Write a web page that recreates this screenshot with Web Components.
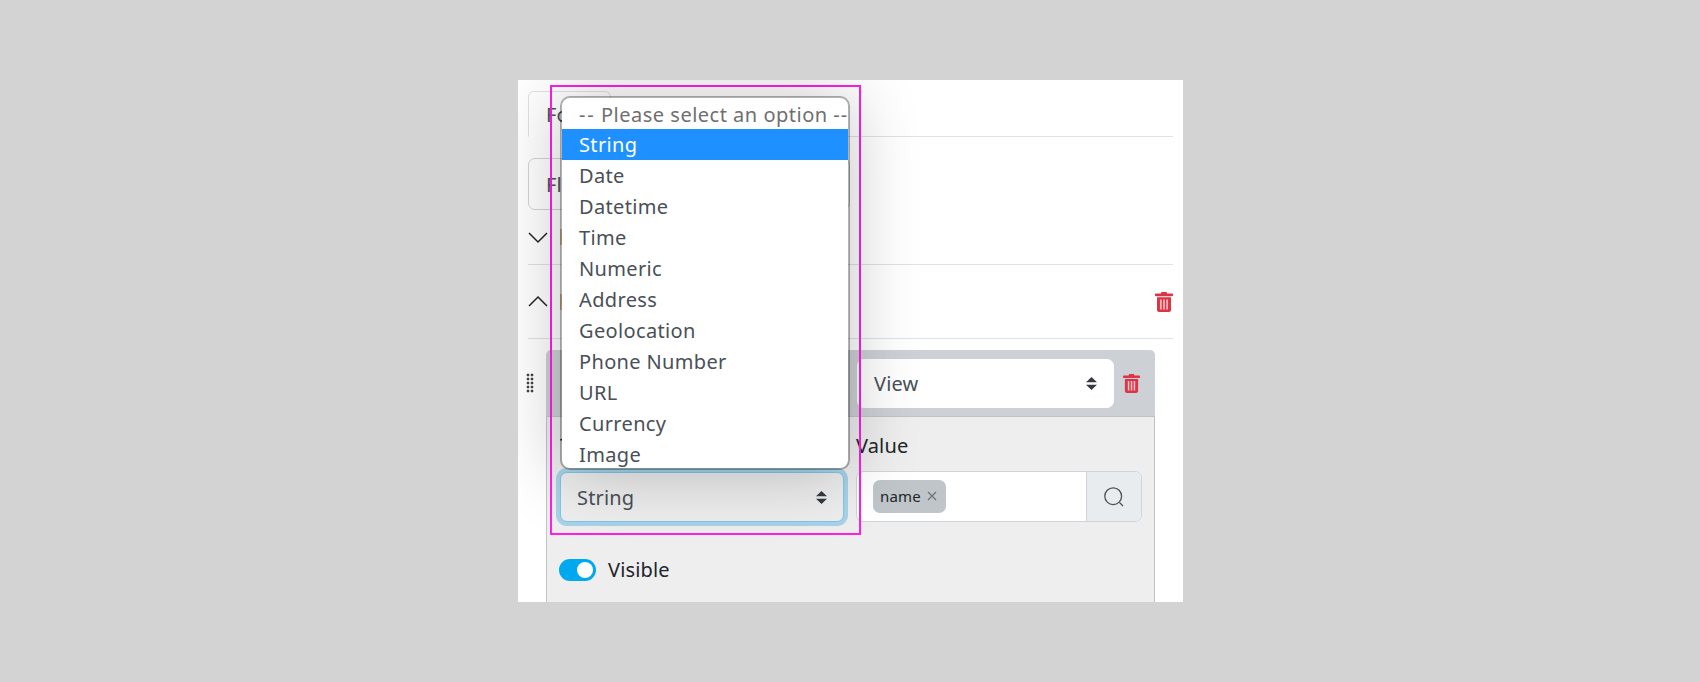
<!DOCTYPE html>
<html>
<head>
<meta charset="utf-8">
<style>
  html, body { margin: 0; height: 682px; overflow: hidden; }
  body { background: #d3d3d3; padding: 80px 0 0 518px; box-sizing: border-box; font-family: "Noto Sans", "Open Sans", sans-serif; color: #212529; letter-spacing: .15px; }
</style>
</head>
<body>
<form-panel>
  <tab-bar label="Form"></tab-bar>
  <tool-button label="Flow"></tool-button>
  <section-row icon="down"></section-row>
  <section-row icon="up" removable></section-row>
  <field-card></field-card>
  <option-menu></option-menu>
</form-panel>

<script>
const TRASH = `<svg viewBox="0 0 18 20" width="18" height="20"><path fill="#dc3545" d="M6.500 0h5l.6 1.600H17.200c.5 0 .8.400.8.800v1.200c0 .4-.3.700-.7.700H.7C.3 4.300 0 4 0 3.600V2.400c0-.4.3-.8.800-.8h5.100zM2 5.300h14v12.700c0 1.100-.9 2-2 2H4c-1.100 0-2-.9-2-2z"/><path fill="#f0c4ca" d="M5.100 7.400h1.600v10H5.100zM8.200 7.400h1.600v10H8.200zM11.300 7.400h1.600v10h-1.600z"/></svg>`;
const CARET = `<svg viewBox="0 0 11 13" width="11" height="13"><path fill="#343a40" d="M0 5.300 5.500 0 11 5.300zM0 7.700h11L5.500 13z"/></svg>`;

class FormPanel extends HTMLElement {
  constructor() {
    super();
    this.attachShadow({ mode: "open" }).innerHTML = `
      <style>
        :host { display: block; position: relative; width: 665px; height: 522px; background: #fff; padding: 11px 10px 0; box-sizing: border-box; overflow: hidden; }
      </style>
      <slot></slot>`;
  }
}

class TabBar extends HTMLElement {
  constructor() {
    super();
    this.attachShadow({ mode: "open" }).innerHTML = `
      <style>
        :host { display: block; box-sizing: border-box; height: 46px; border-bottom: 1px solid #dee2e6; }
        .tab { display: inline-block; box-sizing: border-box; width: 83px; height: 46px; padding: 9px 17px 0; font-size: 20px; color: #495057; border: 1px solid #dee2e6; border-bottom-color: #fff; border-radius: 6px 6px 0 0; background: #fff; }
      </style>
      <div class="tab">${this.getAttribute("label")}</div>`;
  }
}

class ToolButton extends HTMLElement {
  constructor() {
    super();
    this.attachShadow({ mode: "open" }).innerHTML = `
      <style>
        :host { display: block; margin-top: 21px; height: 52px; }
        div { box-sizing: border-box; width: 322px; height: 52px; padding: 12px 17px 0; font-size: 20px; color: #495057; border: 1px solid #ced4da; border-radius: 7px; }
      </style>
      <div>${this.getAttribute("label")}</div>`;
  }
}

class SectionRow extends HTMLElement {
  constructor() {
    super();
    const up = this.getAttribute("icon") === "up";
    const chev = up ? "M1 12 10 3l9 9" : "M1 3l9 9 9-9";
    this.attachShadow({ mode: "open" }).innerHTML = `
      <style>
        :host { display: flex; align-items: center; gap: 12px; border-bottom: 1px solid #dee2e6; box-sizing: border-box; font-size: 20px; }
        :host([icon=down]) { height: 55px; }
        :host([icon=up]) { height: 74px; }
        .chev { width: 20px; height: 15px; flex: none; }
        .folder { width: 20px; height: 16px; background: #e2c6a4; flex: none; }
        .spacer { flex: 1; }
        .del { display: none; width: 18px; height: 20px; line-height: 0; }
        :host([removable]) .del { display: block; }
      </style>
      <svg class="chev" viewBox="0 0 20 15"><path d="${chev}" fill="none" stroke="#212529" stroke-width="1.500"/></svg>
      <span class="folder"></span>
      <span class="spacer"></span>
      <span class="del">${TRASH}</span>`;
  }
}

class SelectBox extends HTMLElement {
  constructor() {
    super();
    this.attachShadow({ mode: "open" }).innerHTML = `
      <style>
        :host { display: flex; align-items: center; justify-content: space-between; box-sizing: border-box; height: 50px; padding: 0 16px 0 16px; background: #fff; border: 1px solid #fff; border-radius: 7px; font-size: 20px; color: #495057; }
        :host([focused]) { border-color: #80c6ea; background: #eee; box-shadow: 0 0 0 4px #a6d3e8; }
        svg { display: block; }
      </style>
      <slot></slot>${CARET}`;
  }
}

class TagInput extends HTMLElement {
  constructor() {
    super();
    this.attachShadow({ mode: "open" }).innerHTML = `
      <style>
        :host { display: flex; box-sizing: border-box; height: 51px; border: 1px solid #ced4da; border-radius: 7px; background: #fff; overflow: hidden; }
        .tags { flex: 1; display: flex; align-items: center; padding-left: 16px; }
        .chip { display: flex; align-items: center; gap: 6px; box-sizing: border-box; width: 73px; height: 33px; padding: 0 0 1px 7px; background: #bfc5c8; border-radius: 7px; font-size: 15px; color: #212529; }
        .chip svg { display: block; }
        .addon { width: 54px; display: flex; align-items: center; justify-content: center; background: #e9ecef; border-left: 1px solid #ced4da; }
      </style>
      <div class="tags"><span class="chip">name <svg width="10" height="10" viewBox="0 0 10 10"><path d="M1 1l8 8M9 1 1 9" stroke="#6c757d" stroke-width="1.300"/></svg></span></div>
      <div class="addon"><svg width="20" height="20" viewBox="0 0 20 20" fill="none" stroke="#495057" stroke-width="1.300"><circle cx="9.200" cy="9.200" r="8.400"/><path d="M15.400 15.400 19 19"/></svg></div>`;
  }
}

class ToggleSwitch extends HTMLElement {
  constructor() {
    super();
    this.attachShadow({ mode: "open" }).innerHTML = `
      <style>
        :host { display: flex; align-items: center; gap: 12px; font-size: 20px; }
        .track { display: flex; justify-content: flex-end; align-items: center; box-sizing: border-box; width: 37px; height: 22px; padding-right: 3px; border-radius: 11px; background: #00a8f0; }
        .knob { width: 16px; height: 16px; border-radius: 50%; background: #fff; }
      </style>
      <span class="track"><span class="knob"></span></span><slot></slot>`;
  }
}

class FieldCard extends HTMLElement {
  constructor() {
    super();
    this.attachShadow({ mode: "open" }).innerHTML = `
      <style>
        :host { display: block; position: relative; margin: 11px 18px 0 18px; height: 260px; }
        .grip { position: absolute; left: -20px; top: 23px; width: 8px; height: 20px; background: radial-gradient(circle, #444 1.200px, transparent 1.700px) 0 0 / 4px 4px; }
        header { display: flex; align-items: center; box-sizing: border-box; height: 66px; background: #cdd1d5; border-radius: 5px 5px 0 0; }
        header .left { width: 311px; }
        header select-box { width: 257px; height: 49px; padding-top: 1px; }
        header .del { margin-left: 9px; line-height: 0; }
        header .del svg { width: 17px; height: 21px; }
        .body { box-sizing: border-box; height: 200px; background: #eee; border: 1px solid #c0c4c8; border-top-color: #c0c4c8; padding: 15px 12px 15px 13px; }
        .grid { display: grid; grid-template-columns: 284px 286px; column-gap: 12px; row-gap: 11px; }
        label { font-size: 20px; line-height: 28px; color: #212529; }
        .grid select-box { margin-top: 1px; }
        toggle-switch { margin-top: 34px; margin-left: -1px; }
      </style>
      <div class="grip"></div>
      <header>
        <span class="left"></span>
        <select-box>View</select-box>
        <span class="del">${TRASH}</span>
      </header>
      <div class="body">
        <div class="grid">
          <label>Type</label><label>Value</label>
          <select-box focused>String</select-box>
          <tag-input></tag-input>
        </div>
        <toggle-switch>Visible</toggle-switch>
      </div>`;
  }
}

class OptionMenu extends HTMLElement {
  constructor() {
    super();
    const items = ["String","Date","Datetime","Time","Numeric","Address","Geolocation","Phone Number","URL","Currency","Image"];
    this.attachShadow({ mode: "open" }).innerHTML = `
      <style>
        :host { position: absolute; left: 32px; top: 5px; width: 311px; height: 450px; box-sizing: border-box; border: 2px solid #ff1fe6; }
        .list { position: absolute; left: 8px; top: 9px; box-sizing: border-box; width: 290px; height: 374px; background: #fff; background-clip: padding-box; border: 2px solid rgba(0,0,0,.3); border-radius: 10px; box-shadow: 0 2px 70px rgba(0,0,0,.24); overflow: hidden; font-size: 20px; color: #495057; letter-spacing: .35px; }
        div.o { height: 31px; line-height: 31px; padding-left: 17px; white-space: nowrap; }
        .ph { color: #6f6f6f; letter-spacing: .5px; }
        .ph b { font-weight: 400; letter-spacing: 1.700px; }
        .ph b:last-child { letter-spacing: 1px; }
        .sel { background: #1e90ff; color: #fff; }
        div.o.ph { line-height: 33px; }
      </style>
      <div class="list">
        <div class="o ph"><b>--</b> Please select an option <b>--</b></div>
        ${items.map((t, i) => `<div class="o ${i === 0 ? "sel" : ""}">${t}</div>`).join("")}
      </div>`;
  }
}

customElements.define("form-panel", FormPanel);
customElements.define("tab-bar", TabBar);
customElements.define("tool-button", ToolButton);
customElements.define("section-row", SectionRow);
customElements.define("select-box", SelectBox);
customElements.define("tag-input", TagInput);
customElements.define("toggle-switch", ToggleSwitch);
customElements.define("field-card", FieldCard);
customElements.define("option-menu", OptionMenu);
</script>
</body>
</html>
